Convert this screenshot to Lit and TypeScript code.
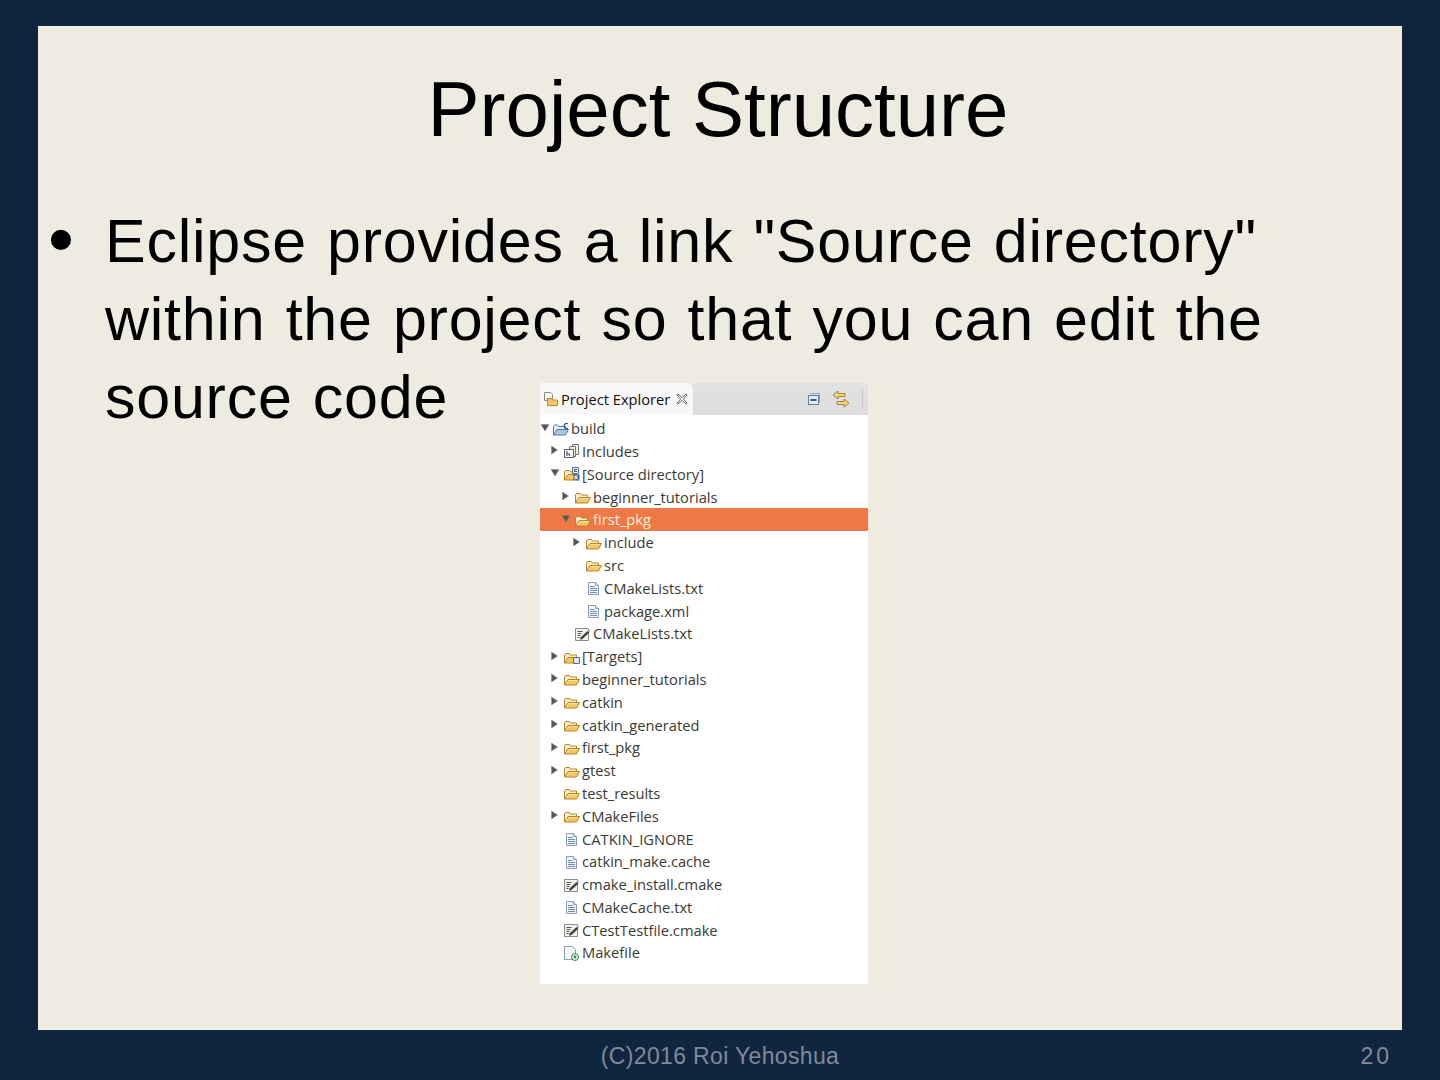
import { LitElement, html, css, svg } from "lit";
import { customElement } from "lit/decorators.js";

type Icon = "open" | "file" | "cmake" | "make" | "src" | "inc" | "tgt" | "proj";
interface Row { label: string; indent: number; arrow?: "r" | "d"; icon: Icon; sel?: boolean; }

const rows: Row[] = [
  { label: "build", indent: 0, arrow: "d", icon: "proj" },
  { label: "Includes", indent: 1, arrow: "r", icon: "inc" },
  { label: "[Source directory]", indent: 1, arrow: "d", icon: "src" },
  { label: "beginner_tutorials", indent: 2, arrow: "r", icon: "open" },
  { label: "first_pkg", indent: 2, arrow: "d", icon: "open", sel: true },
  { label: "include", indent: 3, arrow: "r", icon: "open" },
  { label: "src", indent: 3, icon: "open" },
  { label: "CMakeLists.txt", indent: 3, icon: "file" },
  { label: "package.xml", indent: 3, icon: "file" },
  { label: "CMakeLists.txt", indent: 2, icon: "cmake" },
  { label: "[Targets]", indent: 1, arrow: "r", icon: "tgt" },
  { label: "beginner_tutorials", indent: 1, arrow: "r", icon: "open" },
  { label: "catkin", indent: 1, arrow: "r", icon: "open" },
  { label: "catkin_generated", indent: 1, arrow: "r", icon: "open" },
  { label: "first_pkg", indent: 1, arrow: "r", icon: "open" },
  { label: "gtest", indent: 1, arrow: "r", icon: "open" },
  { label: "test_results", indent: 1, icon: "open" },
  { label: "CMakeFiles", indent: 1, arrow: "r", icon: "open" },
  { label: "CATKIN_IGNORE", indent: 1, icon: "file" },
  { label: "catkin_make.cache", indent: 1, icon: "file" },
  { label: "cmake_install.cmake", indent: 1, icon: "cmake" },
  { label: "CMakeCache.txt", indent: 1, icon: "file" },
  { label: "CTestTestfile.cmake", indent: 1, icon: "cmake" },
  { label: "Makefile", indent: 1, icon: "make" },
];

const folder = svg`<path d="M0.500 14V6l1-1.500h4l1 1.500h6v3" fill="#fbeec8" stroke="#b5862a"/><path d="M0.500 14l3.500-5.500h11.500L12.500 14z" fill="#f7c766" stroke="#b5862a"/><path d="M2.500 13l2.500-3.500h8.500" fill="none" stroke="#fde3a6"/>`;
const page = svg`<path d="M2.500 2.500h7l3 3v9h-10z" fill="#f4f7fb" stroke="#8b9cb6"/><path d="M9.500 2.500v3h3" fill="#dfe6f0" stroke="#8b9cb6"/><path d="M4 6.500h4.500M4 8.500h7M4 10.500h7M4 12.500h7" stroke="#6f8bb3"/>`;
const icons: Record<Icon, unknown> = {
  open: folder,
  file: page,
  cmake: svg`<path d="M0.500 2.500h13v12h-13z" fill="#f3f3f0" stroke="#8c8c88"/><path d="M2.500 5.500h5M2.500 7.500h4M2.500 9.500h3M2.500 11.500h2" stroke="#55554f"/><path d="M5.500 11.500l7-6.500 2 1.500-7 6.500-2.500.8z" fill="#3f3f3c"/><path d="M12.500 5l1.500-1.500 1.500 1.500-1.500 1.500z" fill="#b9a4c9"/>`,
  make: svg`<path d="M0.500 1.500h8l3 3v10h-11z" fill="#f5f9f5" stroke="#8b9cb6"/><circle cx="11" cy="12" r="3.500" fill="#e4f4e6" stroke="#2f8d57"/><circle cx="11" cy="12" r="1.400" fill="#2f8d57"/>`,
  src: svg`<path d="M0.500 14V6l1-1.500h4l1 1.500h6v3" fill="#fbeec8" stroke="#b5862a"/><path d="M0.500 14l3.500-5.500h8.500L9.500 14z" fill="#f7c766" stroke="#b5862a"/><path d="M8.500 1.500h6v6h-6z" fill="#eef2f8" stroke="#506d96"/><path d="M13 3.500h-2.500v2H13" fill="none" stroke="#33527f"/><path d="M9.500 8.500h6v6h-6z" fill="#3e5d88"/><path d="M11 13.500V10h2v2h-2m1.500 0l1.500 1.500" fill="none" stroke="#fff"/>`,
  inc: svg`<path d="M8.500 1.500h6v10h-6z" fill="#f0f0ea" stroke="#77776c"/><path d="M5.500 3.500h6v10h-6z" fill="#f3f2ea" stroke="#77776c"/><path d="M0.500 6.500h9v8h-9z" fill="#fbfaf2" stroke="#5c5c52"/><path d="M3 8v5M3 11h2.500v2" fill="none" stroke="#3d5f8d" stroke-width="1.200"/>`,
  tgt: svg`<path d="M0.500 14V6l1-1.500h4l1 1.500h6v3" fill="#fbeec8" stroke="#b5862a"/><path d="M0.500 14l3.500-5.500h8.500L9.500 14z" fill="#f7c766" stroke="#b5862a"/><path d="M9.500 8.500h6v6h-6z" fill="#d9e9f7" stroke="#3f6f9f"/>`,
  proj: svg`<path d="M0.500 14V5.500l1-1.500h3l1 1.500h7V9" fill="#e8f0fa" stroke="#4f77ad"/><path d="M0.500 14l3.500-5.500h11.500L12.500 14z" fill="#a9c7ea" stroke="#4f77ad"/><path d="M15 2.800a2.600 2.600 0 1 0 0 4.400" fill="none" stroke="#33527f" stroke-width="1.200"/>`,
};

@customElement("app-root")
export class AppRoot extends LitElement {
  static styles = css`
    :host { display: block; width: 1440px; height: 1080px; background: #102540; font-family: "Liberation Sans", Arial, sans-serif; overflow: hidden; }
    .slide { display: flex; flex-direction: column; height: 100%; box-sizing: border-box; padding: 26px 38px 0; }
    .paper { flex: none; height: 1004px; background: #eeebe0; display: flex; flex-direction: column; position: relative; }
    h1 { margin: 0; padding: 37px 4px 0 0; height: 127px; box-sizing: border-box; font: 400 78px/92px "Liberation Sans", sans-serif; color: #000; text-align: center; }
    .body { display: flex; padding: 49px 90px 0 10px; color: #000; font: 400 61px/78px "Liberation Sans", sans-serif; letter-spacing: 0.75px; word-spacing: 2.5px; }
    .bullet { width: 57px; flex: none; font-size: 74px; margin-top: -1px; }
    .shot { position: absolute; left: 502px; top: 357px; width: 328px; height: 601px; background: #fff; font: 400 14.7px/23px "Open Sans", "Noto Sans", sans-serif; color: #3b3b33; overflow: hidden; }
    .tabs { height: 32px; background: linear-gradient(#e3e3e3, #dcdcdc); display: flex; align-items: center; }
    .tab { width: 153px; height: 32px; background: #f8f8f8; border-radius: 0 6px 0 0; display: flex; align-items: center; box-sizing: border-box; padding-left: 3px; color: #111; white-space: nowrap; }
    .tab .ticon { width: 16px; height: 16px; flex: none; margin-right: 2px; }
    .tab .close { width: 12px; height: 12px; flex: none; margin-left: 6px; }
    .tools { margin-left: auto; margin-right: 5px; display: flex; align-items: center; }
    .collapse { margin-right: 11px; }
    .link { margin-right: 12px; }
    .sep { width: 1px; height: 20px; background: #c9c9c9; }
    .tree { padding-top: 2.25px; }
    .row { height: 22.8px; display: flex; align-items: center; white-space: nowrap; }
    .row.sel { background: #f07746; color: #fdf3d8; }
    .arrow { width: 14px; height: 10px; flex: none; margin-top: -2px; }
    .ico { width: 16px; height: 16px; flex: none; margin-right: 2px; }
    .row.root .ico { margin-left: -1px; }
    .foot { flex: 1; display: flex; position: relative; justify-content: center; align-items: center; color: #7f8a97; font: 400 23px/26px "Liberation Sans", sans-serif; letter-spacing: 0.35px; padding-top: 2px; }
    .num { position: absolute; right: 10px; top: 13px; letter-spacing: 3px; color: #7f8a97; }
  `;

  private row(r: Row) {
    const pad = r.indent === 0 ? 0 : r.indent * 11 - 1;
    return html`<div class="row ${r.sel ? "sel" : ""} ${r.indent === 0 ? "root" : ""}" style="padding-left:${pad}px">
      ${this.arrow(r.arrow)}
      <svg class="ico" viewBox="0 0 16 16">${icons[r.icon]}</svg>
      <span>${r.label}</span>
    </div>`;
  }

  private arrow(a?: "r" | "d") {
    return html`<svg class="arrow" viewBox="0 0 14 10">
      ${a === "r" ? svg`<path d="M1.500 1l6 4-6 4z" fill="#55554f" stroke="#8a8a84" stroke-width=".5"/>` : a === "d" ? svg`<path d="M1 1.500h8l-4 6.500z" fill="#55554f" stroke="#8a8a84" stroke-width=".5"/>` : ""}
    </svg>`;
  }

  render() {
    return html`<div class="slide">
      <div class="paper">
        <h1>Project Structure</h1>
        <div class="body">
          <div class="bullet">•</div>
          <div>Eclipse provides a link "Source directory" within the project so that you can edit the source code</div>
        </div>
        <div class="shot">
          <div class="tabs">
            <div class="tab">
              <svg class="ticon" viewBox="0 0 16 16"><path d="M1.500 1.500h6l2 2v6h-8z" fill="#f4f4f0" stroke="#8c8c80"/><path d="M4.500 14.500v-7h4l1 1.500h5v5.500z" fill="#f7c766" stroke="#b5862a"/></svg>
              <span>Project Explorer</span>
              <svg class="close" viewBox="0 0 13 13"><path d="M2 1l4.500 4 4.500-4 1 1-4 4.500 4 4.500-1 1-4.500-4-4.500 4-1-1 4-4.500-4-4.500z" fill="#fff" stroke="#444" stroke-width=".9"/></svg>
            </div>
            <div class="tools">
              <svg class="collapse" viewBox="0 0 14 14" width="14" height="14"><path d="M3.500 1.500h9v9" fill="none" stroke="#8da6c5"/><rect x="1.500" y="3.500" width="10" height="9" fill="#e4edf7" stroke="#5f7fa8"/><path d="M3.500 8h6" stroke="#35587f" stroke-width="2"/></svg>
              <svg class="link" viewBox="0 0 18 18" width="18" height="18"><path d="M1 5l5-4v2.500h7v3H6V9z" fill="#f6d67e" stroke="#a9812f"/><path d="M17 13l-5 4v-2.500H5v-3h7V9z" fill="#f6d67e" stroke="#a9812f"/></svg>
              <div class="sep"></div>
            </div>
          </div>
          <div class="tree">${rows.map((r) => this.row(r))}</div>
        </div>
      </div>
      <div class="foot">(C)2016 Roi Yehoshua<span class="num">20</span></div>
    </div>`;
  }
}
